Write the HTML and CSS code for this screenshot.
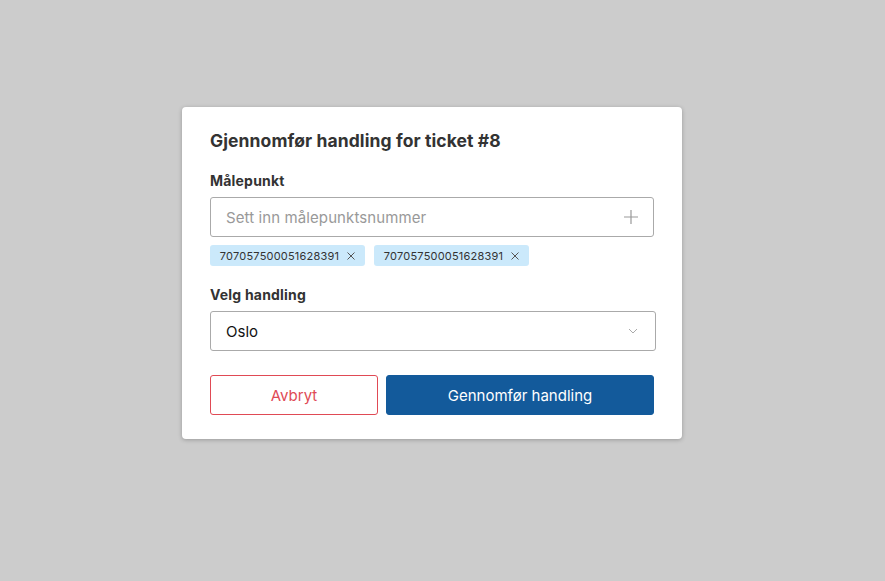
FILE: index.html
```html
<!DOCTYPE html>
<html lang="no">
<head>
<meta charset="utf-8">
<title>Gjennomfør handling</title>
<link rel="stylesheet" href="styles.css">
</head>
<body>
<div class="page">
  <div class="modal">
    <h2 class="title">Gjennomfør handling for ticket #8</h2>
    <div class="field">
      <label class="label">Målepunkt</label>
      <div class="input">
        <span class="placeholder">Sett inn målepunktsnummer</span>
        <svg class="plus" width="16" height="16" viewBox="0 0 16 16"><path d="M8 1v14M1 8h14" stroke="#999" stroke-width="1.2" fill="none"/></svg>
      </div>
      <div class="tags">
        <span class="tag">707057500051628391 <svg class="x" width="8" height="8" viewBox="0 0 8 8"><path d="M0.5 0.5l7 7M7.5 0.5l-7 7" stroke="#555" stroke-width="1" fill="none"/></svg></span>
        <span class="tag">707057500051628391 <svg class="x" width="8" height="8" viewBox="0 0 8 8"><path d="M0.5 0.5l7 7M7.5 0.5l-7 7" stroke="#555" stroke-width="1" fill="none"/></svg></span>
      </div>
    </div>
    <div class="field field2">
      <label class="label">Velg handling</label>
      <div class="select">
        <span class="value">Oslo</span>
        <svg class="chev" width="10" height="6" viewBox="0 0 10 6"><path d="M1 1l4 4 4-4" stroke="#aaa" stroke-width="1" fill="none"/></svg>
      </div>
    </div>
    <div class="actions">
      <button class="btn cancel">Avbryt</button>
      <button class="btn primary">Gennomfør handling</button>
    </div>
  </div>
</div>
</body>
</html>
```
FILE: styles.css
```css
html, body { margin: 0; padding: 0; }
body {
  background: #cccccc;
  font-family: Inter, "Liberation Sans", sans-serif;
  color: #333;
  width: 885px;
  height: 581px;
  overflow: hidden;
}
.page {
  padding-top: 107px;
  padding-left: 182px;
}
.modal {
  width: 500px;
  box-sizing: border-box;
  background: #fff;
  border-radius: 4px;
  box-shadow: 0 1px 4px rgba(0,0,0,0.25);
  padding: 22px 26px 24px 28px;
}
.title {
  margin: 0;
  font-size: 17.5px;
  font-weight: 700;
  line-height: 24px;
  letter-spacing: 0.1px;
  color: #333;
}
.field { margin-top: 19px; }
.field2 { margin-top: 20px; }
.label {
  display: block;
  font-size: 14px;
  font-weight: 700;
  line-height: 18px;
  letter-spacing: 0.2px;
  color: #333;
  margin-bottom: 7px;
}
.input, .select {
  height: 40px;
  box-sizing: border-box;
  border: 1px solid #aaa;
  border-radius: 3px;
  display: flex;
  align-items: center;
  justify-content: space-between;
  padding: 0 14px 0 15px;
}
.input { width: 444px; }
.select { width: 446px; padding-right: 17px; }
.placeholder { font-size: 15px; color: #999; letter-spacing: 0.1px; }
.value { font-size: 15px; color: #111; }
.tags {
  display: flex;
  gap: 9px;
  margin-top: 8px;
}
.tag {
  background: #cbe9fb;
  border-radius: 3px;
  height: 21px;
  width: 155px;
  box-sizing: border-box;
  display: flex;
  align-items: center;
  justify-content: center;
  gap: 8px;
  font-size: 11px;
  letter-spacing: 0.2px;
  color: #333;
}
.x { display: block; }
.actions {
  display: flex;
  gap: 8px;
  margin-top: 24px;
}
.btn {
  height: 40px;
  border-radius: 3px;
  font-family: inherit;
  font-size: 15px;
  cursor: pointer;
}
.cancel {
  width: 168px;
  background: #fff;
  border: 1px solid #e04a55;
  color: #e04a55;
}
.primary {
  width: 268px;
  background: #135a9b;
  border: 1px solid #135a9b;
  color: #fff;
}
```
